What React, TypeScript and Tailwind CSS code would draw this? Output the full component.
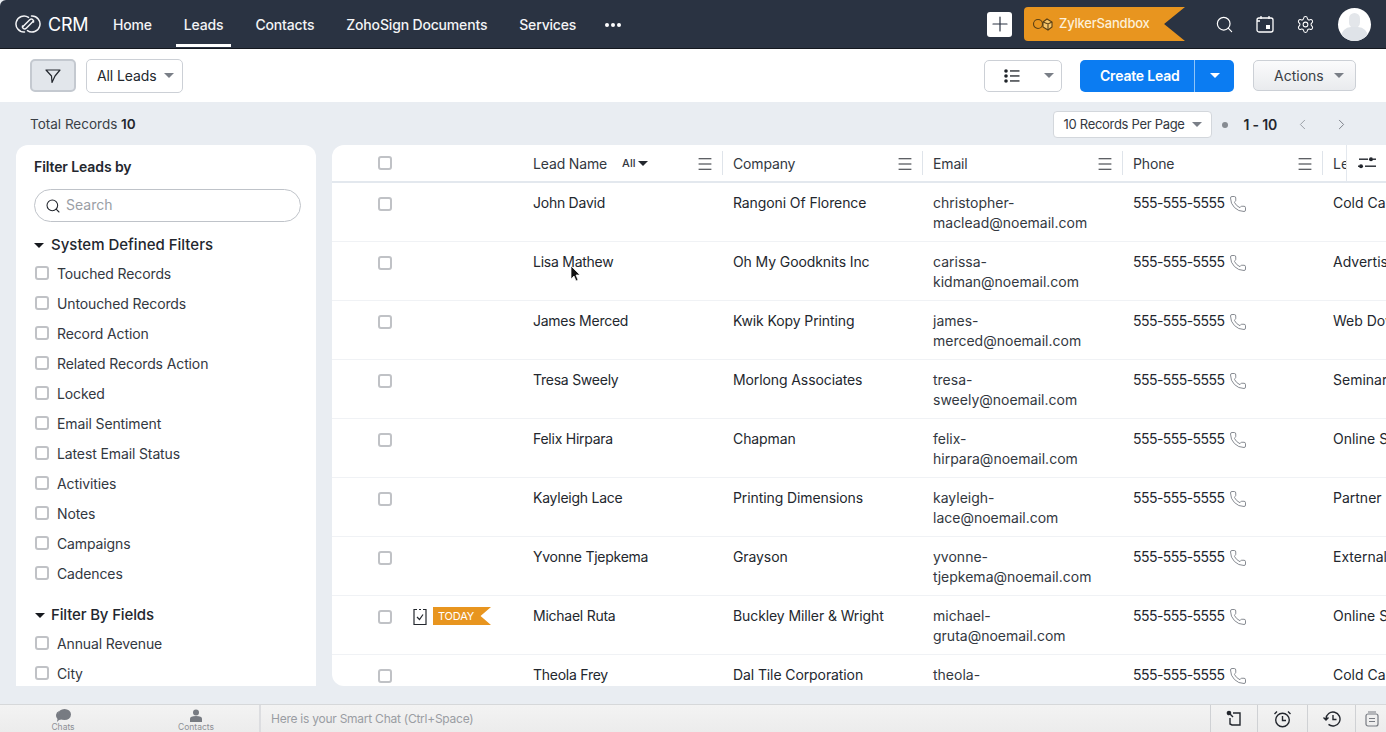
import React from "react";
import { Search, Settings, ChevronLeft, ChevronRight, Phone, Plus, Menu } from "lucide-react";

const Caret = ({ c = "border-t-[#7a7f87]", m = "" }: { c?: string; m?: string }) => (
  <span className={`inline-block w-0 h-0 border-x-[5px] border-x-transparent border-t-[5px] ${c} ${m}`} />
);

const Box = ({ m = "" }: { m?: string }) => (
  <span className={`block w-[14px] h-[14px] rounded-[3px] border-2 border-[#c0c2c6] bg-white shrink-0 ${m}`} />
);

const nav = [
  ["Home", "ml-[25px]"],
  ["Leads", "ml-[32px]"],
  ["Contacts", "ml-[32px]"],
  ["ZohoSign Documents", "ml-[32px]"],
  ["Services", "ml-[32px]"],
];

const sys = ["Touched Records", "Untouched Records", "Record Action", "Related Records Action", "Locked", "Email Sentiment", "Latest Email Status", "Activities", "Notes", "Campaigns", "Cadences"];

const rows: [string, string, string, string, string][] = [
  ["John David", "Rangoni Of Florence", "christopher-", "maclead@noemail.com", "Cold Call"],
  ["Lisa Mathew", "Oh My Goodknits Inc", "carissa-", "kidman@noemail.com", "Advertisement"],
  ["James Merced", "Kwik Kopy Printing", "james-", "merced@noemail.com", "Web Download"],
  ["Tresa Sweely", "Morlong Associates", "tresa-", "sweely@noemail.com", "Seminar"],
  ["Felix Hirpara", "Chapman", "felix-", "hirpara@noemail.com", "Online Store"],
  ["Kayleigh Lace", "Printing Dimensions", "kayleigh-", "lace@noemail.com", "Partner"],
  ["Yvonne Tjepkema", "Grayson", "yvonne-", "tjepkema@noemail.com", "External"],
  ["Michael Ruta", "Buckley Miller & Wright", "michael-", "gruta@noemail.com", "Online Store"],
  ["Theola Frey", "Dal Tile Corporation", "theola-", "frey@noemail.com", "Cold Call"],
];

const HeadCell = ({ label, children }: { label: string; children?: React.ReactNode }) => (
  <div className="w-[200px] relative shrink-0 h-full flex items-center pl-[10px]">
    <span className="tracking-[-0.15px]">{label}</span>
    {children}
    <Menu size={18} strokeWidth={1.3} className="text-[#22262c] absolute right-[9px] top-[10px]" />
    <span className="absolute right-0 top-[6px] h-[24px] w-px bg-[#dfe4ea]" />
  </div>
);

export default function App() {
  return (
    <div className="relative w-[1386px] h-[732px] overflow-hidden flex flex-col bg-[#e9edf2] text-[14px] text-[#23272e] font-['Inter','Noto_Sans',sans-serif]">
      {/* Top bar */}
      <header className="h-[49px] shrink-0 bg-[#2a3342] border-b border-[#14181f] flex items-center text-white rounded-tl-[6px]">
        <svg width="26" height="20" viewBox="0 0 26 20" fill="none" stroke="#f3f4f6" strokeWidth="1.5" strokeLinecap="round" className="ml-[15px]">
          <path d="M13.5 3.4A8 8 0 1 0 9.500 18" />
          <path d="M12.500 16.600A8 8 0 1 0 16.500 2" />
          <path d="M7.500 13 14.500 6c2-2 4.500-.500 4 2" />
          <path d="M18.500 7 11.500 14c-2 2-4.500.500-4-2" />
        </svg>
        <span className="ml-[7px] text-[18px] w-[40px] tracking-[-0.2px]">CRM</span>
        {nav.map(([n, m]) => (
          <span key={n} className={`${m} relative h-[48px] pt-[2px] text-[14px] font-medium tracking-[-0.17px] leading-[46px] text-[#f3f4f6]`}>
            {n}
            {n === "Leads" && <span className="absolute left-[-8px] right-[-8px] bottom-[1px] h-[3px] bg-white" />}
          </span>
        ))}
        <span className="ml-[29px] flex gap-[2px] mt-[2px]">
          <i className="block w-[4px] h-[4px] rounded-full bg-white" />
          <i className="block w-[4px] h-[4px] rounded-full bg-white" />
          <i className="block w-[4px] h-[4px] rounded-full bg-white" />
        </span>
        <div className="ml-auto flex items-center">
          <span className="w-[25px] h-[25px] rounded-[3px] bg-white flex items-center justify-center">
            <Plus size={24} strokeWidth={1.2} className="text-[#2a3342]" />
          </span>
          <div className="ml-[12px] w-[161px] h-[34px] bg-[#e8951f] rounded-l-[4px] flex items-center [clip-path:polygon(0_0,100%_0,87%_50%,100%_100%,0_100%)]">
            <svg width="22" height="16" viewBox="0 0 22 16" fill="none" stroke="#5a4015" strokeWidth="1.1" className="ml-[8px]">
              <circle cx="6" cy="8" r="4.500" />
              <path d="M11 6l4-3 5 3v5l-4 3-5-3z" fill="#f6c56a" />
              <path d="M11 6l5 2 4-2M16 8v6" />
            </svg>
            <span className="ml-[5px] text-[13px] tracking-[-0.2px] text-[#fdf0d8] font-medium">ZylkerSandbox</span>
          </div>
          <Search size={19} strokeWidth={1.5} className="ml-[30px] text-white" />
          <svg width="18" height="18" viewBox="0 0 18 18" fill="none" stroke="#fff" strokeWidth="1.300" className="ml-[22px]">
            <rect x="1" y="3" width="16" height="14" rx="2" />
            <path d="M5 1v3M13 1v3M1 6h3" />
            <rect x="10" y="10" width="4" height="4" fill="#fff" stroke="none" />
          </svg>
          <Settings size={19} strokeWidth={1.3} className="ml-[22px] text-white" />
          <span className="ml-[23px] mr-[15px] w-[33px] h-[33px] rounded-full bg-white overflow-hidden relative block">
            <span className="absolute left-[11px] top-[5px] w-[11px] h-[15px] rounded-full bg-[#e3e6ea]" />
            <span className="absolute left-[3px] top-[19px] w-[27px] h-[20px] rounded-full bg-[#dfe3e8]" />
          </span>
        </div>
      </header>

      {/* Toolbar */}
      <div className="h-[53px] shrink-0 bg-white flex items-center pl-[30px] pr-[30px]">
        <button className="w-[46px] h-[33px] rounded-[5px] bg-[#e2e6eb] border-2 border-[#c4c9d0] flex items-center justify-center">
          <svg width="16" height="16" viewBox="0 0 16 16" fill="none" stroke="#23272e" strokeWidth="1.200">
            <path d="M1 2h14L10 8l-3 6.500-.500-6.500z" strokeLinejoin="round" />
          </svg>
        </button>
        <button className="ml-[10px] w-[97px] h-[34px] rounded-[5px] border border-[#ccd0d6] bg-white flex items-center pl-[10px] text-[#23272e] tracking-[-0.1px]">
          All Leads<Caret m="ml-[7px]" />
        </button>
        <button className="ml-auto w-[78px] h-[32px] rounded-[5px] border border-[#ccd0d6] bg-white flex items-center pl-[19px]">
          <svg width="16" height="14" viewBox="0 0 16 14" fill="#1f2329">
            <circle cx="2" cy="2" r="1.800" /><circle cx="2" cy="7" r="1.800" /><circle cx="2" cy="12" r="1.800" />
            <rect x="6" y="1.300" width="9.500" height="1.300" /><rect x="6" y="6.300" width="9.500" height="1.300" /><rect x="6" y="11.300" width="9.500" height="1.300" />
          </svg>
          <Caret m="ml-[24px]" />
        </button>
        <div className="ml-[18px] w-[154px] h-[32px] rounded-[5px] bg-[#0b7cf2] flex items-center text-white font-semibold">
          <span className="w-[115px] pl-[20px] tracking-[-0.2px] border-r border-[#8fc4f8] leading-[32px]">Create Lead</span>
          <span className="flex-1 flex justify-center"><Caret c="border-t-white" /></span>
        </div>
        <button className="ml-[19px] w-[103px] h-[31px] rounded-[5px] border border-[#ccd0d6] bg-gradient-to-b from-[#fbfbfc] to-[#e9ebee] flex items-center pl-[20px] text-[#3a3f46]">
          Actions<Caret m="ml-[10px]" />
        </button>
      </div>

      {/* Sub bar */}
      <div className="h-[43px] shrink-0 flex items-center pl-[30px] pr-[36px] pt-[2px] text-[13.500px] text-[#3a3f46]">
        <span>Total Records <b className="font-semibold text-[#23272e]">10</b></span>
        <div className="ml-auto flex items-center">
          <span className="w-[159px] h-[27px] bg-white rounded-[4px] border border-[#d3d7dc] flex items-center pl-[10px] text-[13px] tracking-[-0.3px] text-[#33383f]">
            10 Records Per Page<Caret m="ml-[7px]" />
          </span>
          <span className="ml-[10px] w-[6px] h-[6px] rounded-full bg-[#868b92]" />
          <b className="ml-[16px] font-semibold text-[#23272e] text-[14px] tracking-[-0.2px]">1 - 10</b>
          <ChevronLeft size={17} strokeWidth={1.400} className="ml-[17px] text-[#9a9fa6]" />
          <ChevronRight size={17} strokeWidth={1.400} className="ml-[22px] text-[#7d828a]" />
        </div>
      </div>

      {/* Main */}
      <main className="h-[541px] shrink-0 flex pl-[16px] gap-[16px]">
        <aside className="w-[300px] shrink-0 bg-white rounded-t-[12px] overflow-hidden pl-[18px] pr-[15px] pt-[12px]">
          <h2 className="text-[14px] leading-[20px] font-semibold tracking-[-0.1px]">Filter Leads by</h2>
          <div className="mt-[12px] h-[33px] rounded-full border border-[#bfc3c9] flex items-center pl-[10px]">
            <Search size={16} strokeWidth={1.600} className="text-[#23272e]" />
            <span className="ml-[5px] mb-[2px] text-[#9a9ea5]">Search</span>
          </div>
          <h3 className="mt-[13px] leading-[20px] text-[15px] font-medium flex items-center">
            <Caret c="border-t-[#16191e]" /><span className="ml-[7px]">System Defined Filters</span>
          </h3>
          <ul className="mt-[3px] tracking-[-0.12px]">
            {sys.map((s) => (
              <li key={s} className="h-[30px] flex items-center text-[#33383f]"><Box m="ml-[1px]" /><span className="ml-[8px]">{s}</span></li>
            ))}
          </ul>
          <h3 className="mt-[17px] leading-[20px] text-[15px] font-medium flex items-center tracking-[-0.15px]">
            <Caret c="border-t-[#16191e]" m="ml-[1px]" /><span className="ml-[6px]">Filter By Fields</span>
          </h3>
          <ul className="mt-[3px] tracking-[-0.12px]">
            {["Annual Revenue", "City"].map((s) => (
              <li key={s} className="h-[30px] flex items-center text-[#33383f]"><Box m="ml-[1px]" /><span className="ml-[8px]">{s}</span></li>
            ))}
          </ul>
        </aside>

        <section className="relative flex-1 min-w-0 bg-white rounded-tl-[12px] rounded-bl-[12px] overflow-hidden">
          <div className="h-[38px] flex items-center border-b-2 border-[#e3e8ee] text-[#33383f] whitespace-nowrap">
            <div className="w-[191px] shrink-0 h-full flex items-center pl-[46px]"><Box /></div>
            <HeadCell label="Lead Name">
              <span className="ml-[15px] text-[11px] font-medium flex items-center">All<Caret c="border-t-[#23272e]" m="ml-[3px]" /></span>
            </HeadCell>
            <HeadCell label="Company" />
            <HeadCell label="Email" />
            <HeadCell label="Phone" />
            <span className="pl-[10px]">Lead Source</span>
          </div>
          {rows.map((r, i) => (
            <div key={r[0]} className="h-[59px] flex border-b border-[#f0f2f5] pt-[10px] leading-[20px] whitespace-nowrap">
              <div className="w-[191px] shrink-0 flex items-start pl-[46px] pt-[4px]">
                <Box />
                {i === 7 && (
                  <>
                    <svg width="16" height="18" viewBox="0 0 16 18" fill="none" stroke="#23272e" strokeWidth="1.200" className="ml-[20px] mt-[-2px]">
                      <path d="M5 1.500H2v15h12v-15h-3M7 1.500h2" />
                      <path d="M5 9l2.500 2.500L11 6.500" />
                    </svg>
                    <span className="ml-[5px] mt-[-3px] w-[58px] h-[18px] bg-[#e8951f] text-white text-[11px] tracking-[-0.2px] leading-[18px] pl-[5px] [clip-path:polygon(0_0,100%_0,82%_50%,100%_100%,0_100%)]">TODAY</span>
                  </>
                )}
              </div>
              <div className="w-[200px] shrink-0 pl-[10px] tracking-[-0.25px]">{r[0]}</div>
              <div className="w-[200px] shrink-0 pl-[10px] tracking-[-0.1px]">{r[1]}</div>
              <div className="w-[200px] shrink-0 pl-[10px] text-[#33383f]">{r[2]}<br />{r[3]}</div>
              <div className="w-[200px] shrink-0 pl-[10px] flex items-start">
                <span className="tracking-[-0.55px]">555-555-5555</span>
                <Phone size={18} strokeWidth={1.300} className="ml-[5px] mt-[2px] text-[#84888f]" />
              </div>
              <div className="pl-[10px]">{r[4]}</div>
            </div>
          ))}
          <div className="absolute right-0 top-0 w-[40px] h-[36px] bg-white border-l border-[#e3e8ee] flex items-center pl-[11px]">
            <svg width="18" height="14" viewBox="0 0 18 14" fill="#23272e">
              <rect x="1" y="2.500" width="9" height="1.400" /><circle cx="13" cy="3.200" r="2" /><rect x="15" y="2.500" width="3" height="1.400" />
              <circle cx="3" cy="10.200" r="2" /><rect x="0" y="9.500" width="1" height="1.400" /><rect x="7" y="9.500" width="11" height="1.400" />
            </svg>
          </div>
        </section>
      </main>

      {/* Footer */}
      <footer className="mt-auto h-[28px] shrink-0 border-t border-[#d6d8da] bg-gradient-to-b from-[#f3f3f3] to-[#ececec] flex text-[#8d9096]">
        <div className="w-[261px] shrink-0 relative border-r-2 border-[#dcdde0]">
          <div className="absolute left-[52px] top-[4px] flex flex-col items-center w-[22px]">
            <svg width="16" height="14" viewBox="0 0 16 14" fill="#777b82">
              <ellipse cx="9.500" cy="5.500" rx="6.500" ry="5.500" /><path d="M1 6a5 5 0 0 1 3-4c-1 3 0 6 3 8-1 .600-2 1-3 1l-2 2 .500-3A5 5 0 0 1 1 6z" />
            </svg>
            <span className="text-[8.500px] leading-[9px]">Chats</span>
          </div>
          <div className="absolute left-[178px] top-[4px] flex flex-col items-center w-[36px]">
            <svg width="14" height="14" viewBox="0 0 14 14" fill="#777b82">
              <circle cx="7" cy="3.500" r="3" /><path d="M1 13V9.500C1 8 3 7 7 7s6 1 6 2.500V13z" />
            </svg>
            <span className="text-[8.500px] leading-[9px]">Contacts</span>
          </div>
        </div>
        <span className="ml-[10px] text-[12px] tracking-[-0.25px] leading-[28px] text-[#9a9da3]">Here is your Smart Chat (Ctrl+Space)</span>
        <div className="ml-auto flex h-full text-[#33383f]">
          <div className="w-[48px] flex items-center justify-center border-x border-[#cfd1d4]">
            <svg width="17" height="17" viewBox="0 0 17 17" fill="none" stroke="#23272e" strokeWidth="1.400">
              <path d="M7 3h7v12H6L4 14V8" /><circle cx="3" cy="3" r="1.600" fill="#23272e" /><path d="M3 3l4 4" />
            </svg>
          </div>
          <div className="w-[50px] flex items-center justify-center border-r border-[#cfd1d4]">
            <svg width="19" height="18" viewBox="0 0 19 18" fill="none" stroke="#23272e" strokeWidth="1.400">
              <circle cx="9.500" cy="10" r="6.800" /><path d="M9.500 6v4.500h3.500M1.500 4 4 1.500M17.500 4 15 1.500" />
            </svg>
          </div>
          <div className="w-[48px] flex items-center justify-center border-r border-[#cfd1d4]">
            <svg width="19" height="17" viewBox="0 0 19 17" fill="none" stroke="#23272e" strokeWidth="1.400">
              <path d="M4 9a7 7 0 1 1 2.500 5.400M1.500 7.500 4 10l2.500-2.500M11 5v4.500h3.500" />
            </svg>
          </div>
          <div className="w-[30px] flex items-center pl-[8px]">
            <svg width="16" height="16" viewBox="0 0 16 16" fill="none" stroke="#777b82" strokeWidth="1.200">
              <rect x="2" y="3" width="12" height="12" rx="2" /><path d="M4 1h8M5 7.500h6M5 10.500h6" />
            </svg>
          </div>
        </div>
      </footer>

      {/* Mouse pointer */}
      <svg width="11" height="16" viewBox="0 0 11 16" className="absolute left-[570px] top-[266px]">
        <path d="M1 0v13l3-3 2 5 2-1-2-5h4z" fill="#111" stroke="#fff" strokeWidth="0.700" />
      </svg>
    </div>
  );
}
